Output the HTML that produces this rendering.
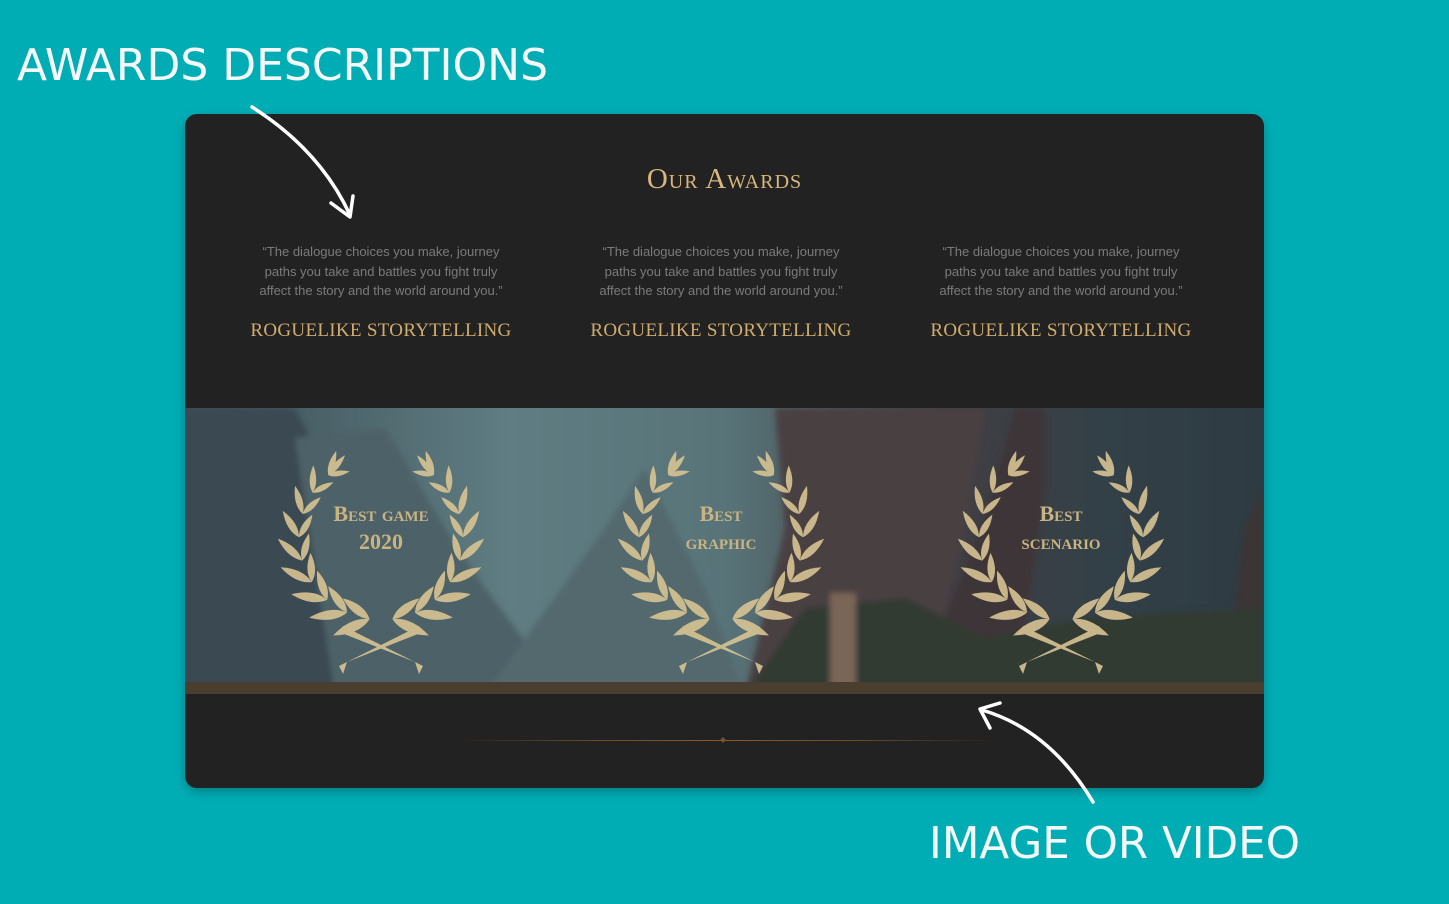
<!DOCTYPE html>
<html><head><meta charset="utf-8">
<style>
html,body{margin:0;padding:0;}
body{width:1449px;height:904px;background:#00adb5;position:relative;overflow:hidden;font-family:"Liberation Sans",sans-serif;}
.card{position:absolute;left:185px;top:114px;width:1079px;height:674px;border-radius:12px;background:#222222;overflow:hidden;box-shadow:0 4px 10px rgba(0,0,0,.25);}
.title{position:absolute;top:163px;left:0;width:1449px;text-align:center;font-family:"Liberation Serif",serif;font-variant:small-caps;color:#d8b77c;font-size:29px;letter-spacing:1px;}
.col{position:absolute;top:242px;width:300px;text-align:center;}
.q{color:#7b7b7b;font-size:13px;line-height:19.5px;}
.h{margin-top:19px;color:#d0ad6e;font-family:"Liberation Serif",serif;font-size:19px;letter-spacing:.3px;white-space:nowrap;}
.band{position:absolute;left:0;top:294px;width:1079px;height:286px;}
.aw{position:absolute;font-family:"Liberation Serif",serif;font-weight:bold;font-variant:small-caps;color:#c8b382;font-size:22px;line-height:28px;text-align:center;width:200px;}
.ann{position:absolute;}
</style></head><body>
<div class="card">
  <div class="band">
  <svg width="1079" height="286" viewBox="0 0 1079 286">
    <defs>
      <linearGradient id="sky" x1="0" y1="0" x2="1" y2="0">
        <stop offset="0" stop-color="#3c4e56"/><stop offset="0.3" stop-color="#5f7d82"/>
        <stop offset="0.5" stop-color="#587479"/><stop offset="0.7" stop-color="#423e42"/><stop offset="0.85" stop-color="#334048"/><stop offset="1" stop-color="#2e3b42"/>
      </linearGradient>
      <filter id="bl"><feGaussianBlur stdDeviation="3"/></filter>
    </defs>
    <rect width="1079" height="286" fill="url(#sky)"/>
    <g filter="url(#bl)">
    <polygon points="0,0 110,0 140,60 170,286 0,286" fill="#3a4a52"/>
    <polygon points="110,30 200,20 260,120 300,180 380,286 150,286" fill="#4d6268"/>
    <polygon points="300,286 420,120 460,60 520,180 560,286" fill="#52696e"/>
    <polygon points="590,0 800,0 780,120 740,286 560,286 600,120" fill="#4a3f42"/>
    <polygon points="730,286 800,110 830,0 860,0 860,80 830,286" fill="#3c3438"/>
    <polygon points="1040,286 1060,120 1079,80 1079,286" fill="#3a3434"/>
    <polygon points="560,286 620,200 720,190 800,230 900,210 1079,200 1079,286" fill="#333a30"/>
    <rect x="645" y="185" width="26" height="95" fill="#7a6558"/>
    </g>
    <rect x="0" y="274" width="1079" height="12" fill="#4a3e30"/>
    <g id="wreaths" fill="#d9c493" opacity="0.9"></g>
  </svg>
  <div class="aw" style="left:96px;top:92px;">Best game<br>2020</div>
  <div class="aw" style="left:436px;top:92px;">Best<br>graphic</div>
  <div class="aw" style="left:776px;top:92px;">Best<br>scenario</div>
  </div>
  <div style="position:absolute;left:270px;top:626px;width:540px;height:1px;background:linear-gradient(90deg,transparent,#6a4a25,#8a5a28,#6a4a25,transparent);"></div>
  <div style="position:absolute;left:536px;top:624px;width:4px;height:4px;background:#7a5530;transform:rotate(45deg);"></div>
</div>
<div class="title">Our Awards</div>
<div class="col" style="left:231px;"><div class="q">“The dialogue choices you make, journey<br>paths you take and battles you fight truly<br>affect the story and the world around you.”</div><div class="h">ROGUELIKE STORYTELLING</div></div>
<div class="col" style="left:571px;"><div class="q">“The dialogue choices you make, journey<br>paths you take and battles you fight truly<br>affect the story and the world around you.”</div><div class="h">ROGUELIKE STORYTELLING</div></div>
<div class="col" style="left:911px;"><div class="q">“The dialogue choices you make, journey<br>paths you take and battles you fight truly<br>affect the story and the world around you.”</div><div class="h">ROGUELIKE STORYTELLING</div></div>

<svg class="ann" style="left:0;top:0" width="1449" height="904">
  <text x="17" y="80" textLength="531" lengthAdjust="spacingAndGlyphs" fill="#f4f8f8" font-family="DejaVu Sans, sans-serif" font-size="44">AWARDS DESCRIPTIONS</text>
  <text x="929" y="858" textLength="371" lengthAdjust="spacingAndGlyphs" fill="#f4f8f8" font-family="DejaVu Sans, sans-serif" font-size="44">IMAGE OR VIDEO</text>
  <path d="M252,107 Q320,150 350,215" stroke="#fff" stroke-width="3.5" fill="none" stroke-linecap="round"/>
  <path d="M331,203 L350,217 L353,196" stroke="#fff" stroke-width="3.5" fill="none" stroke-linecap="round" stroke-linejoin="round"/>
  <path d="M1093,802 Q1050,730 982,710" stroke="#fff" stroke-width="3.5" fill="none" stroke-linecap="round"/>
  <path d="M1000,703 L980,709 L990,728" stroke="#fff" stroke-width="3.5" fill="none" stroke-linecap="round" stroke-linejoin="round"/>
</svg>
<script>
(function(){
  var g=document.getElementById('wreaths'),out='';
  function leaf(x,y,ang,len,w){
    return '<path transform="translate('+x.toFixed(1)+','+y.toFixed(1)+') rotate('+ang.toFixed(1)+')" d="M0,0 Q'+w+','+(-len*0.4)+' 0,'+(-len)+' Q'+(-w)+','+(-len*0.4)+' 0,0Z"/>';
  }
  [196,536,876].forEach(function(cx){
    var cy=130,r=82;
    [-1,1].forEach(function(s){
      var n=9;
      for(var i=0;i<n;i++){
        var t=(98+i*(132/(n-1)))*Math.PI/180;
        var x=cx+(s<0?1:-1)*r*Math.cos(t), y=cy+r*Math.sin(t);
        var tx=-Math.sin(t),ty=Math.cos(t); if(s>0){tx=-tx;}
        var base=Math.atan2(ty,tx)*180/Math.PI+90;
        var len=40-i*1.8,w=10-i*0.5;
        out+=leaf(x,y,base+(s<0?-32:32),len,w);
        out+=leaf(x,y,base+(s<0?30:-30),len*0.85,w*0.9);
      }
      var tt=230*Math.PI/180;
      out+=leaf(cx+(s<0?1:-1)*r*Math.cos(tt),cy+r*Math.sin(tt),(s<0?40:-40),26,6);
    });
    out+='<path d="M'+(cx-42)+','+(cy+128)+' L'+(cx+38)+','+(cy+88)+' L'+(cx+42)+','+(cy+94)+' L'+(cx-34)+','+(cy+124)+' L'+(cx-38)+','+(cy+136)+'Z"/>';
    out+='<path d="M'+(cx+42)+','+(cy+128)+' L'+(cx-38)+','+(cy+88)+' L'+(cx-42)+','+(cy+94)+' L'+(cx+34)+','+(cy+124)+' L'+(cx+38)+','+(cy+136)+'Z"/>';
  });
  g.innerHTML=out;
})();
</script>
</body></html>
